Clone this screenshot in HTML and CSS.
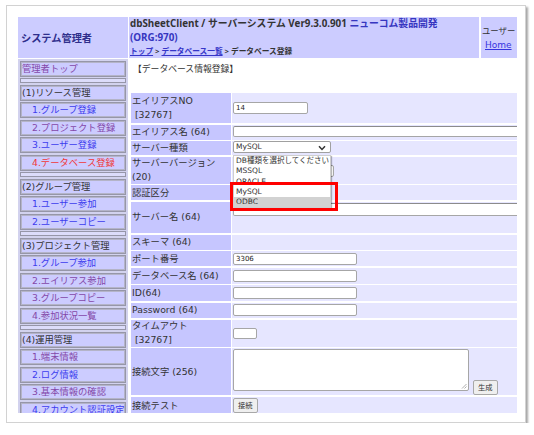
FILE: index.html
```html
<!DOCTYPE html>
<html lang="ja">
<head>
<meta charset="utf-8">
<title>データベース登録</title>
<link rel="stylesheet" href="styles.css">
</head>
<body>
<div class="frame">
  <div class="page">
    <div class="hdr">
      <div class="hdr-role">システム管理者</div>
      <div class="hdr-main">
        <div class="hdr-title">dbSheetClient / サーバーシステム Ver9.3.0.901 <span class="org">ニューコム製品開発<br>(ORG:970)</span></div>
        <div class="crumb"><a class="crumb-link">トップ</a> &gt; <a class="crumb-link">データベース一覧</a> &gt; データベース登録</div>
      </div>
      <div class="hdr-user">
        <div class="user-name">ユーザー</div>
        <a class="home">Home</a>
      </div>
    </div>
    <div class="body">
      <nav class="side">
        <a class="item visited">管理者トップ</a>
        <div class="spacer"></div>
        <div class="item head">(1)リソース管理</div>
        <a class="item sub link">1.グループ登録</a>
        <a class="item sub visited">2.プロジェクト登録</a>
        <a class="item sub link">3.ユーザー登録</a>
        <a class="item sub current">4.データベース登録</a>
        <div class="spacer"></div>
        <div class="item head">(2)グループ管理</div>
        <a class="item sub link">1.ユーザー参加</a>
        <a class="item sub link">2.ユーザーコピー</a>
        <div class="spacer"></div>
        <div class="item head">(3)プロジェクト管理</div>
        <a class="item sub link">1.グループ参加</a>
        <a class="item sub visited">2.エイリアス参加</a>
        <a class="item sub visited">3.グループコピー</a>
        <a class="item sub visited">4.参加状況一覧</a>
        <div class="spacer"></div>
        <div class="item head">(4)運用管理</div>
        <a class="item sub visited">1.端末情報</a>
        <a class="item sub link">2.ログ情報</a>
        <a class="item sub visited">3.基本情報の確認</a>
        <a class="item sub link">4.アカウント認証設定</a>
      </nav>
      <main class="main">
        <div class="title">【データベース情報登録】</div>
        <div class="form">
          <div class="lbl">エイリアスNO<br>&nbsp;[32767]</div>
          <div class="val"><span class="inp w75">14</span></div>

          <div class="lbl">エイリアス名 (64)</div>
          <div class="val top"><span class="inp wide"></span></div>

          <div class="lbl">サーバー種類</div>
          <div class="val dd-cell">
            <div class="select">MySQL
              <svg class="chev" width="8" height="6" viewBox="0 0 8 6"><path d="M1 1.2 L4 4.4 L7 1.2" fill="none" stroke="#333" stroke-width="1.5"/></svg>
            </div>
            <div class="dd-list">
              <div class="opt">DB種類を選択してください</div>
              <div class="opt">MSSQL</div>
              <div class="opt">ORACLE</div>
              <div class="opt">MySQL</div>
              <div class="opt hl">ODBC</div>
            </div>
            <div class="redbox"></div>
          </div>

          <div class="lbl">サーバーバージョン<br>(20)</div>
          <div class="val"><span class="inp w101"></span></div>

          <div class="lbl">認証区分</div>
          <div class="val"></div>

          <div class="lbl">サーバー名 (64)</div>
          <div class="val top"><span class="inp wide tall"></span></div>

          <div class="lbl">スキーマ (64)</div>
          <div class="val"></div>

          <div class="lbl">ポート番号</div>
          <div class="val"><span class="inp w124">3306</span></div>

          <div class="lbl">データベース名 (64)</div>
          <div class="val"><span class="inp w124"></span></div>

          <div class="lbl">ID(64)</div>
          <div class="val"><span class="inp w124"></span></div>

          <div class="lbl">Password (64)</div>
          <div class="val"><span class="inp w124"></span></div>

          <div class="lbl">タイムアウト<br>&nbsp;[32767]</div>
          <div class="val"><span class="inp w24"></span></div>

          <div class="lbl">接続文字 (256)</div>
          <div class="val bottom">
            <span class="textarea"><svg class="grip" width="6" height="6" viewBox="0 0 6 6"><path d="M5.5 1 L1 5.5 M5.5 3.5 L3.5 5.5" stroke="#999" stroke-width="0.8"/></svg></span>
            <span class="btn gen">生成</span>
          </div>

          <div class="lbl">接続テスト</div>
          <div class="val"><span class="btn">接続</span></div>
        </div>
      </main>
    </div>
  </div>
</div>
</body>
</html>
```

FILE: styles.css
```css
* { box-sizing: border-box; }
html, body { margin: 0; padding: 0; background: #fff; }
body {
  font-family: "DejaVu Sans", "Noto Sans CJK JP", sans-serif;
  color: #333;
}
a { text-decoration: none; cursor: pointer; }

.frame {
  margin: 5px 0 0 6px;
  width: 520px;
  height: 418px;
  border: 1px solid #d2d2d2;
  box-shadow: 2px 2px 2px rgba(0, 0, 0, 0.35);
  padding: 11px 0 0 11px;
  background: #fff;
}
.page {
  width: 499px;
  height: 396px;
  overflow: hidden;
  display: flex;
  flex-direction: column;
}

/* header */
.hdr { display: flex; height: 41px; flex: none; }
.hdr-role {
  width: 110px;
  flex: none;
  background: #ccccff;
  display: flex;
  align-items: center;
  padding-left: 3px;
  font: bold 10.2px "Noto Sans CJK JP", sans-serif;
  color: #2f2f8c;
}
.hdr-main {
  width: 350px;
  flex: none;
  margin-left: 1px;
  background: #ccccff;
  padding-left: 1px;
}
.hdr-title {
  font: bold 9.8px/14px "Open Sans", "Noto Sans CJK JP", sans-serif;
  color: #333;
  white-space: nowrap;
}
.org { color: #3636c0; }
.crumb {
  font: bold 7.7px/13px "Open Sans", "Noto Sans CJK JP", sans-serif;
  color: #333;
  white-space: nowrap;
}
.crumb-link { color: #3535c8; text-decoration: underline; }
.hdr-user {
  flex: none;
  width: 80px;
  margin-left: 2px;
  background: #ccccff;
  display: flex;
  flex-direction: column;
  justify-content: center;
  padding-left: 1px;
  font-size: 8.4px;
  line-height: 14px;
  white-space: nowrap;
}
.home { color: #3535e0; text-decoration: underline; margin-left: 3px; font-size: 9px; }

/* body */
.body { display: flex; flex: 1; margin-top: 1px; min-height: 0; }
.side {
  width: 110px;
  flex: none;
  background: #d2d2ee;
  padding: 1.5px 2px 0 2px;
  display: flex;
  flex-direction: column;
  gap: 1.5px;
}
.item {
  height: 16px;
  flex: none;
  background: #ccccff;
  border: 1px solid #9696a8;
  box-shadow: inset 0 0 0 1px #b4b4c8;
  display: flex;
  align-items: center;
  padding-left: 1px;
  font-size: 9.3px;
  line-height: 12px;
  white-space: nowrap;
  overflow: hidden;
  color: #333;
}
.item.sub { padding-left: 11px; }
.item.link { color: #3c3cee; }
.item.visited { color: #8448a8; }
.item.current { color: #f03838; }
.spacer {
  height: 5px;
  flex: none;
  background: #dcdcfa;
  border: 1px solid #9696a8;
}

.main {
  width: 388px;
  flex: none;
  margin-left: 1px;
  background: #fff;
  padding-top: 3px;
}
.title {
  font-size: 8.8px;
  line-height: 14px;
  padding-left: 4px;
  color: #333;
}
.form {
  margin: 17px 0 0 2px;
  display: grid;
  grid-template-columns: 100px 300px;
  grid-template-rows: 30px 15px 14px 27px 15px 31px 15px 15px 16px 16px 15px 27px 47px 18px;
  column-gap: 1px;
  row-gap: 1.6px;
}
.lbl {
  background: #c6c6ff;
  font-size: 9.3px;
  line-height: 14px;
  padding-left: 1px;
  display: flex;
  flex-direction: column;
  justify-content: center;
  color: #333;
  white-space: nowrap;
}
.val {
  background: #e6e6ff;
  padding-left: 1px;
  display: flex;
  align-items: center;
}
.val.top { align-items: flex-start; }
.val.bottom { align-items: flex-end; }

.inp {
  display: block;
  height: 12px;
  background: #fff;
  border: 1px solid #a6a6a6;
  border-radius: 2px;
  font-size: 7px;
  line-height: 10px;
  padding-left: 2px;
  color: #222;
  flex: none;
}
.w75 { width: 75px; }
.w101 { width: 101px; margin-top: 2px; }
.w124 { width: 124px; }
.w24 { width: 24px; height: 11px; }
.wide { width: 400px; margin-top: 1px; height: 11px; border-top-color: #8c8c8c; }
.wide.tall { height: 13px; margin-top: 1px; }

/* select + dropdown */
.dd-cell { position: relative; align-items: flex-start; }
.select {
  width: 98px;
  height: 12px;
  background: #fff;
  border: 1px solid #a0a0a0;
  border-radius: 2px;
  font-size: 7.5px;
  line-height: 10px;
  padding-left: 2px;
  color: #333;
  position: relative;
}
.chev { position: absolute; right: 4px; top: 2.5px; }
.dd-list {
  position: absolute;
  top: 14px;
  left: 1px;
  width: 98px;
  background: #fff;
  border: 1px solid #cfcfcf;
  box-shadow: 1px 1px 1px rgba(0, 0, 0, 0.28);
  z-index: 2;
}
.opt {
  height: 10.2px;
  font-size: 7.5px;
  line-height: 10.2px;
  padding-left: 2px;
  color: #333;
  white-space: nowrap;
  overflow: hidden;
}
.opt.hl { background: #d2d2d2; }
.redbox {
  position: absolute;
  top: 41px;
  left: -2px;
  width: 108px;
  height: 29px;
  border: 3px solid #ff0000;
  z-index: 3;
}

/* textarea + buttons */
.textarea {
  display: block;
  position: relative;
  width: 236px;
  height: 42px;
  margin-bottom: 4px;
  background: #fff;
  border: 1px solid #a6a6a6;
  border-radius: 2px;
  flex: none;
}
.grip { position: absolute; right: 1px; bottom: 1px; }
.btn {
  display: block;
  flex: none;
  height: 15px;
  padding: 0 4px;
  background: #efefef;
  border: 1px solid #a8a8a8;
  border-radius: 2px;
  font-size: 7.3px;
  line-height: 13px;
  color: #333;
}
.btn.gen { margin-left: 4px; }
```
